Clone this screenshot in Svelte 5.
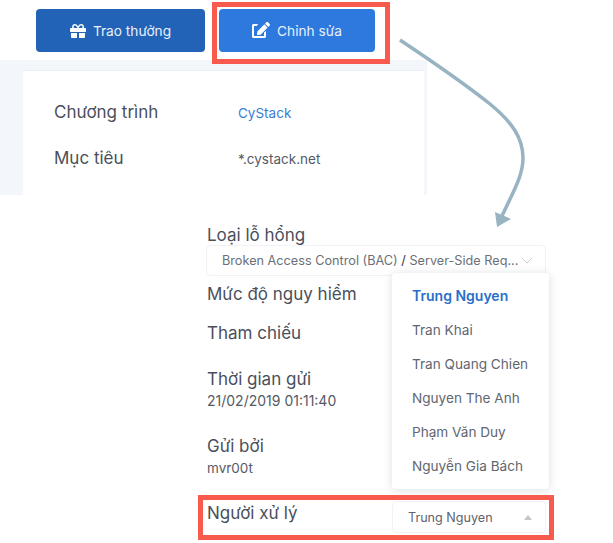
<script>
  const assignees = ['Trung Nguyen', 'Tran Khai', 'Tran Quang Chien', 'Nguyen The Anh', 'Phạm Văn Duy', 'Nguyễn Gia Bách'];
  let selected = $state('Trung Nguyen');
</script>

<div class="page">
  <div class="actions">
    <button class="btn reward">
      <svg class="gift" viewBox="0 0 512 512" fill="currentColor"><path d="M32 448c0 17.7 14.3 32 32 32h160V320H32v128zm256 32h160c17.7 0 32-14.3 32-32V320H288v160zm192-320h-42.1c6.2-12.1 10.1-25.5 10.1-40 0-48.5-39.5-88-88-88-41.6 0-68.5 21.3-103 68.3-34.5-47-61.4-68.3-103-68.3-48.5 0-88 39.5-88 88 0 14.5 3.8 27.9 10.1 40H32c-17.7 0-32 14.3-32 32v80c0 8.8 7.2 16 16 16h480c8.8 0 16-7.2 16-16v-80c0-17.7-14.3-32-32-32zm-326.1 0c-22.1 0-40-17.9-40-40s17.9-40 40-40c19.9 0 34.6 3.3 86.1 80h-86.1zm206.1 0h-86.1c51.4-76.5 65.7-80 86.1-80 22.1 0 40 17.9 40 40s-17.9 40-40 40z"/></svg>
      Trao thưởng
    </button>
    <button class="btn edit">
      <svg class="pen" viewBox="0 0 576 512" fill="currentColor"><path d="M402.6 83.2l90.2 90.2c3.8 3.8 3.8 10 0 13.8L274.4 405.6l-92.8 10.3c-12.4 1.4-22.9-9.1-21.5-21.5l10.3-92.8L388.8 83.2c3.8-3.8 10-3.8 13.8 0zm162-22.9l-48.8-48.8c-15.2-15.2-39.9-15.2-55.2 0l-35.4 35.4c-3.8 3.8-3.8 10 0 13.8l90.2 90.2c3.8 3.8 10 3.8 13.8 0l35.4-35.4c15.2-15.3 15.2-40 0-55.2zM384 346.2V448H64V128h73.2c3.2 0 6.2-1.3 8.5-3.5l40-40c7.6-7.6 2.2-20.5-8.5-20.5H48C21.5 64 0 85.5 0 112v352c0 26.5 21.5 48 48 48h352c26.5 0 48-21.5 48-48V306.2c0-10.7-12.9-16-20.5-8.5l-40 40c-2.2 2.3-3.5 5.3-3.5 8.5z"/></svg>
      Chỉnh sửa
    </button>
  </div>

  <div class="summary">
    <div class="card">
      <div class="row">
        <span class="label">Chương trình</span>
        <a class="value link" href="#cystack">CyStack</a>
      </div>
      <div class="row">
        <span class="label">Mục tiêu</span>
        <span class="value">*.cystack.net</span>
      </div>
    </div>
  </div>

  <div class="form">
    <div class="label">Loại lỗ hổng</div>
    <div class="select wide">
      <span>Broken Access Control (BAC) <b>/</b> Server-Side Req...</span>
      <svg class="chevron" viewBox="0 0 12 7" fill="none" stroke="currentColor" stroke-width="1"><path d="M1 1l5 5 5-5"/></svg>
    </div>

    <div class="label severity">Mức độ nguy hiểm</div>
    <div class="label reference">Tham chiếu</div>
    <div class="label sent">Thời gian gửi</div>
    <div class="value date">21/02/2019 01:11:40</div>
    <div class="label spaced">Gửi bởi</div>
    <div class="value">mvr00t</div>

    <div class="assignee">
      <div class="label">Người xử lý</div>
      <div class="select narrow">
        <span>{selected}</span>
        <i class="caret"></i>
      </div>
    </div>

    <ul class="menu">
      {#each assignees as name}
        <li class:active={name === selected}>{name}</li>
      {/each}
    </ul>
  </div>

  <!-- annotations drawn over the screenshot -->
  <div class="mark mark-edit"></div>
  <div class="mark mark-assignee"></div>
  <svg class="arrow" viewBox="0 0 613 543" fill="none">
    <path d="M400 40C445 70 470 88 490 104C512 122 523 138 523 158C523 176 513 192 502 216" stroke="#98b3c2" stroke-width="3.5"/>
    <path d="M495 212L511 219L497 227Z" fill="#98b3c2"/>
  </svg>
</div>

<style>
  :global(body) {
    margin: 0;
    background: #fff;
  }

  .page {
    position: relative;
    width: 613px;
    height: 543px;
    overflow: hidden;
    font-family: Inter, "Liberation Sans", sans-serif;
    color: #4a4f5c;
  }

  .actions {
    display: flex;
    gap: 14px;
    height: 60px;
    padding: 9px 0 0 36px;
    box-sizing: border-box;
  }

  .btn {
    display: flex;
    align-items: center;
    justify-content: center;
    gap: 7px;
    height: 43px;
    border: none;
    border-radius: 4px;
    color: #e8f0fb;
    font: inherit;
    font-size: 13.7px;
  }

  .reward {
    width: 169px;
    background: #2263b8;
  }

  .edit {
    width: 156px;
    background: #2d79de;
  }

  .gift {
    width: 16px;
    height: 16px;
    color: #fff;
  }

  .pen {
    width: 18px;
    height: 16px;
    margin-top: -2px;
    color: #fff;
  }

  .summary {
    width: 427px;
    height: 135px;
    padding: 10px 3px 0 23px;
    box-sizing: border-box;
    background: #f3f6fb;
  }

  .card {
    height: 125px;
    padding: 31px 0 0 31px;
    box-sizing: border-box;
    background: #fff;
    border-top: 1px solid #edf1f7;
  }

  .row {
    display: flex;
    align-items: center;
    height: 22px;
    margin-bottom: 24px;
  }

  .row .label {
    width: 184px;
    margin-top: -2px;
  }

  .label {
    font-size: 17px;
    line-height: 22px;
    color: #4a4f5c;
  }

  .value {
    font-size: 13.5px;
    line-height: 22px;
    color: #555a66;
  }

  .date {
    font-size: 14px;
  }

  .link {
    color: #3a7ed2;
    text-decoration: none;
  }

  .form {
    position: relative;
    padding: 29px 67px 0 207px;
  }

  .select {
    display: flex;
    align-items: center;
    justify-content: space-between;
    box-sizing: border-box;
    border: 1px solid #f1f2f5;
    border-radius: 4px;
    font-size: 12.6px;
    white-space: nowrap;
    color: #6b6f78;
  }

  .wide {
    height: 31px;
    margin: -1px 0 0 -1px;
    padding: 0 12px 0 15px;
    font-size: 12.7px;
  }

  .wide b {
    font-weight: 400;
    color: #33363c;
  }

  .chevron {
    width: 12px;
    height: 7px;
    color: #c9cdd3;
  }

  .severity {
    margin-top: 7px;
  }

  .reference {
    margin-top: 17px;
  }

  .sent {
    margin-top: 24px;
  }

  .spaced {
    margin-top: 23px;
  }

  .assignee {
    display: flex;
    align-items: flex-start;
    justify-content: space-between;
    margin-top: 22px;
  }

  .assignee .label {
    margin-top: 1px;
  }

  .narrow {
    width: 154px;
    height: 32px;
    padding: 0 13px 0 15px;
    color: #5f636c;
  }

  .caret {
    width: 0;
    height: 0;
    border: 4.5px solid transparent;
    border-top: none;
    border-bottom: 5px solid #c2c5cb;
  }

  .menu {
    position: absolute;
    left: 392px;
    top: 78px;
    width: 157px;
    margin: 0;
    padding: 6px 0;
    box-sizing: border-box;
    list-style: none;
    background: #fff;
    border-radius: 4px;
    box-shadow: 0 1px 10px rgba(40, 50, 70, 0.16);
  }

  .menu li {
    height: 34px;
    padding-left: 20px;
    font-size: 13.6px;
    line-height: 34px;
    color: #62666f;
  }

  .menu .active {
    font-size: 14px;
    font-weight: 600;
    color: #2a6fc9;
  }

  .mark {
    position: absolute;
    box-sizing: border-box;
    border: 5px solid #f85a4e;
  }

  .mark-edit {
    left: 212px;
    top: 2px;
    width: 178px;
    height: 62px;
  }

  .mark-assignee {
    left: 198px;
    top: 495px;
    width: 356px;
    height: 45px;
  }

  .arrow {
    position: absolute;
    inset: 0;
    width: 613px;
    height: 543px;
    pointer-events: none;
  }
</style>
